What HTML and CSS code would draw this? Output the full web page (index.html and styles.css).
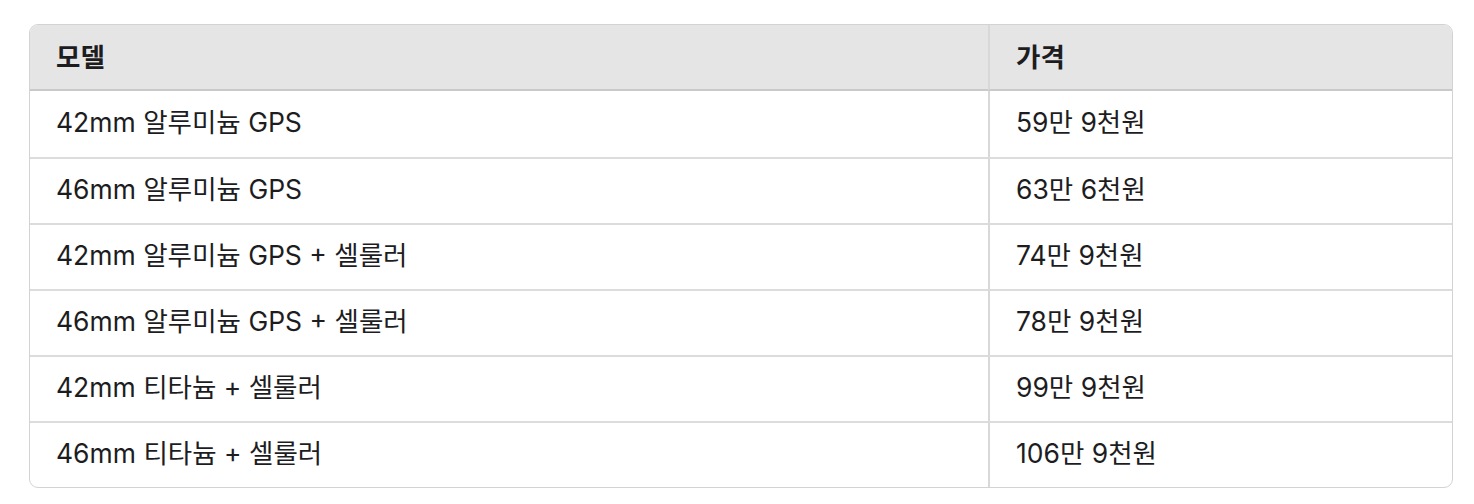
FILE: index.html
```html
<!DOCTYPE html>
<html lang="ko">
<head>
<meta charset="utf-8">
<link rel="stylesheet" href="styles.css">
</head>
<body>
<div class="wrap">
  <table class="price-table">
    <thead>
      <tr><th class="col-model">모델</th><th>가격</th></tr>
    </thead>
    <tbody>
      <tr><td>42mm 알루미늄 GPS</td><td>59만 9천원</td></tr>
      <tr><td>46mm 알루미늄 GPS</td><td>63만 6천원</td></tr>
      <tr><td>42mm 알루미늄 GPS + 셀룰러</td><td>74만 9천원</td></tr>
      <tr><td>46mm 알루미늄 GPS + 셀룰러</td><td>78만 9천원</td></tr>
      <tr><td>42mm 티타늄 + 셀룰러</td><td>99만 9천원</td></tr>
      <tr><td>46mm 티타늄 + 셀룰러</td><td>106만 9천원</td></tr>
    </tbody>
  </table>
</div>
</body>
</html>
```

FILE: styles.css
```css
html, body {
  margin: 0;
  padding: 0;
  background: #ffffff;
}

.wrap {
  padding: 24px 21px 16px 29px;
}

.price-table {
  width: 100%;
  border-collapse: separate;
  border-spacing: 0;
  border: 1.5px solid #d3d3d3;
  border-radius: 9px;
  overflow: hidden;
  font-family: Inter, "Noto Sans CJK KR", "Noto Sans", sans-serif;
  font-size: 26.5px;
  color: #1d1d1f;
}

.price-table th,
.price-table td {
  text-align: left;
  padding: 0 26px;
  height: 66px;
  line-height: 30px;
  box-sizing: border-box;
}

.price-table th {
  height: 65.5px;
  background: #e5e5e5;
  font-weight: 700;
  border-bottom: 2px solid #c9c9c9;
}

.price-table .col-model {
  width: 958px;
}

.price-table td {
  font-weight: 400;
  padding-bottom: 3px;
  border-top: 2px solid #dcdcdc;
}

.price-table tbody tr:first-child td {
  border-top: none;
}

.price-table th + th,
.price-table td + td {
  border-left: 2px solid #d8d8d8;
}
```
